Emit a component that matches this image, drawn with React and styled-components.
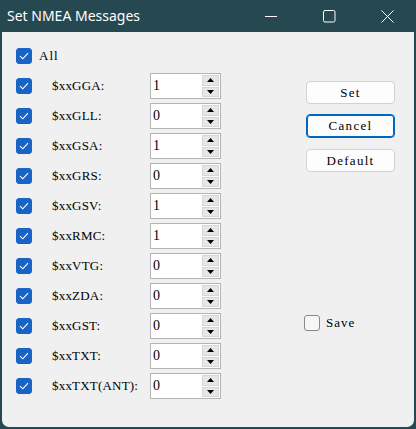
import React, { useState } from 'react';
import styled, { createGlobalStyle } from 'styled-components';

const GlobalStyle = createGlobalStyle`
  html, body {
    margin: 0;
    padding: 0;
    background: #264850;
  }
  #root {
    width: 416px;
    height: 429px;
  }
`;

const messages = [
  { name: '$xxGGA:', value: '1' },
  { name: '$xxGLL:', value: '0' },
  { name: '$xxGSA:', value: '1' },
  { name: '$xxGRS:', value: '0' },
  { name: '$xxGSV:', value: '1' },
  { name: '$xxRMC:', value: '1' },
  { name: '$xxVTG:', value: '0' },
  { name: '$xxZDA:', value: '0' },
  { name: '$xxGST:', value: '0' },
  { name: '$xxTXT:', value: '0' },
  { name: '$xxTXT(ANT):', value: '0' },
];

const Window = styled.div`
  width: 416px;
  height: 429px;
  display: flex;
  flex-direction: column;
  background: #264850;
  border-radius: 8px;
  overflow: hidden;
`;

const TitleBar = styled.div`
  height: 32px;
  flex: none;
  display: flex;
  align-items: center;
  color: #fff;
  font-family: "Noto Sans", "Open Sans", sans-serif;
  font-size: 14px;
`;

const Title = styled.span`
  flex: 1;
  padding-left: 7px;
  margin-top: -2px;
`;

const CaptionButton = styled.div`
  width: 58px;
  height: 32px;
  display: flex;
  align-items: center;
  justify-content: center;
`;

const Body = styled.div`
  flex: 1;
  margin: 0 2px 2px 2px;
  background: #f0f0f0;
  border-radius: 0 0 7px 7px;
  display: flex;
  font-family: "Liberation Serif", "DejaVu Serif", serif;
  font-size: 13px;
  color: #000;
`;

const LeftColumn = styled.div`
  padding: 16px 0 0 14px;
  width: 205px;
  display: flex;
  flex-direction: column;
`;

const AllRow = styled.label`
  display: flex;
  align-items: center;
  height: 16px;
  gap: 7px;
  margin-bottom: 9px;
  letter-spacing: 1px;
`;

const Row = styled.div`
  display: flex;
  align-items: center;
  height: 26px;
  margin-bottom: 4px;
`;

const Label = styled.span`
  width: 98px;
  margin-left: 20px;
  white-space: nowrap;
  letter-spacing: 0.2px;
`;

const Box = styled.span`
  width: 16px;
  height: 16px;
  flex: none;
  box-sizing: border-box;
  border-radius: 3px;
  display: flex;
  align-items: center;
  justify-content: center;
  background: ${p => (p.$checked ? '#1864c6' : '#f6f6f6')};
  border: 1px solid ${p => (p.$checked ? '#1864c6' : '#8a8a8a')};
  margin-top: ${p => p.$offset || 0}px;
`;

const Spin = styled.div`
  width: 71px;
  height: 26px;
  box-sizing: border-box;
  border: 1px solid #b4b4b4;
  background: #fff;
  display: flex;
  padding: 1px;
`;

const SpinValue = styled.span`
  flex: 1;
  padding: 3px 0 0 1px;
  font-size: 14px;
  line-height: 16px;
`;

const SpinButtons = styled.div`
  width: 17px;
  display: flex;
  flex-direction: column;
  gap: 1px;
`;

const SpinArrow = styled.div`
  flex: 1;
  background: #e6e6e6;
  border: 1px solid #d6d6d6;
  display: flex;
  align-items: center;
  justify-content: center;
`;

const RightColumn = styled.div`
  margin-left: 85px;
  padding-top: 49px;
  display: flex;
  flex-direction: column;
`;

const Button = styled.button`
  width: 89px;
  height: 23px;
  margin-bottom: 10px;
  box-sizing: border-box;
  background: #fdfdfd;
  border: 1px solid ${p => (p.$focused ? '#0067c0' : '#d2d2d2')};
  box-shadow: ${p => (p.$focused ? 'inset 0 0 0 1px #0067c0' : 'none')};
  border-radius: 4px;
  font-family: "Liberation Serif", "DejaVu Serif", serif;
  font-size: 13px;
  font-weight: 400;
  letter-spacing: 1.3px;
  color: #000;
  padding: 0;
  &:nth-child(2) {
    height: 24px;
    margin-bottom: 11px;
  }
`;

const SaveRow = styled.label`
  display: flex;
  align-items: center;
  gap: 6px;
  margin: 133px 0 0 -2px;
  letter-spacing: 1px;
`;

const Check = () => (
  <svg width="10" height="8" viewBox="0 0 10 8">
    <path d="M1 4.2 L3.8 6.8 L9 1.2" fill="none" stroke="#fff" strokeWidth="1.1" />
  </svg>
);

const Checkbox = ({ checked, offset }) => (
  <Box $checked={checked} $offset={offset}>{checked && <Check />}</Box>
);

const SpinBox = ({ value }) => (
  <Spin>
    <SpinValue>{value}</SpinValue>
    <SpinButtons>
      <SpinArrow>
        <svg width="7" height="4" viewBox="0 0 7 4"><path d="M3.5 0 L7 4 L0 4 Z" fill="#000" /></svg>
      </SpinArrow>
      <SpinArrow>
        <svg width="7" height="4" viewBox="0 0 7 4"><path d="M0 0 L7 0 L3.5 4 Z" fill="#000" /></svg>
      </SpinArrow>
    </SpinButtons>
  </Spin>
);

export default function App() {
  const [save] = useState(false);

  return (
    <>
      <GlobalStyle />
      <Window>
        <TitleBar>
          <Title>Set NMEA Messages</Title>
          <CaptionButton>
            <svg width="12" height="12" viewBox="0 0 12 12"><path d="M0 6.5 H12" stroke="#fff" strokeWidth="1" /></svg>
          </CaptionButton>
          <CaptionButton>
            <svg width="13" height="13" viewBox="0 0 13 13"><rect x="0.5" y="0.5" width="11.5" height="11.5" rx="1.5" fill="none" stroke="#fff" strokeWidth="1" /></svg>
          </CaptionButton>
          <CaptionButton>
            <svg width="13" height="13" viewBox="0 0 13 13"><path d="M0.5 0.5 L12.5 12.5 M12.5 0.5 L0.5 12.5" stroke="#fff" strokeWidth="1" /></svg>
          </CaptionButton>
        </TitleBar>
        <Body>
          <LeftColumn>
            <AllRow>
              <Checkbox checked />
              <span>All</span>
            </AllRow>
            {messages.map(m => (
              <Row key={m.name}>
                <Checkbox checked offset={-1} />
                <Label>{m.name}</Label>
                <SpinBox value={m.value} />
              </Row>
            ))}
          </LeftColumn>
          <RightColumn>
            <Button>Set</Button>
            <Button $focused>Cancel</Button>
            <Button>Default</Button>
            <SaveRow>
              <Checkbox checked={save} />
              <span>Save</span>
            </SaveRow>
          </RightColumn>
        </Body>
      </Window>
    </>
  );
}
